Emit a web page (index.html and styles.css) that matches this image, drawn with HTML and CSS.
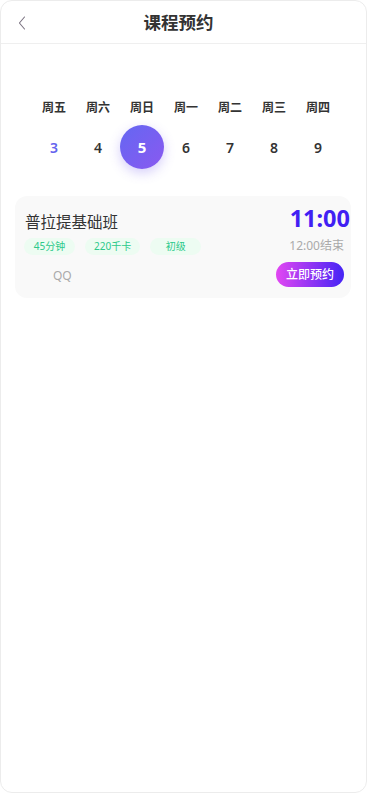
FILE: index.html
```html
<!DOCTYPE html>
<html lang="zh-CN">
<head>
<meta charset="utf-8">
<meta name="viewport" content="width=device-width, initial-scale=1">
<title>课程预约</title>
<link rel="stylesheet" href="styles.css">
</head>
<body>
<div class="frame">
  <header class="header">
    <button class="back" aria-label="返回">
      <svg width="8" height="14" viewBox="0 0 8 14"><path d="M6.5 1 L1.4 7 L6.5 13" fill="none" stroke="#7a7280" stroke-width="1.1" stroke-linecap="round" stroke-linejoin="round"/></svg>
    </button>
    <h1 class="title">课程预约</h1>
  </header>

  <section class="calendar">
    <div class="week-row">
      <span>周五</span><span>周六</span><span>周日</span><span>周一</span><span>周二</span><span>周三</span><span>周四</span>
    </div>
    <div class="date-row">
      <span class="date today">3</span>
      <span class="date">4</span>
      <span class="date active">5</span>
      <span class="date">6</span>
      <span class="date">7</span>
      <span class="date">8</span>
      <span class="date">9</span>
    </div>
  </section>

  <section class="card">
    <div class="card-left">
      <div class="course-name">普拉提基础班</div>
      <div class="tags">
        <span class="tag">45分钟</span>
        <span class="tag">220千卡</span>
        <span class="tag">初级</span>
      </div>
      <div class="coach">QQ</div>
    </div>
    <div class="card-right">
      <div class="start">11:00</div>
      <div class="end">12:00结束</div>
      <button class="book">立即预约</button>
    </div>
  </section>
</div>
</body>
</html>
```
FILE: styles.css
```css
* { box-sizing: border-box; }
html, body { margin: 0; padding: 0; background: #fff; }
body {
  font-family: "Noto Sans", "Noto Sans CJK SC", sans-serif;
  color: #333;
}
.frame {
  width: 367px;
  height: 793px;
  border: 1px solid #ececec;
  border-radius: 12px;
  overflow: hidden;
  background: #fff;
}
.header {
  height: 43px;
  border-bottom: 1px solid #efefef;
  display: flex;
  align-items: center;
  position: relative;
}
.back {
  position: absolute;
  left: 16px;
  top: 14px;
  padding: 0;
  border: 0;
  background: none;
  width: 10px;
  height: 16px;
  display: flex;
  align-items: center;
  justify-content: center;
}
.title {
  margin: 0 auto;
  padding-right: 10px;
  font-size: 17.5px;
  font-weight: 700;
  color: #333;
  line-height: 24px;
}
.calendar {
  padding: 56px 0 0 31px;
}
.week-row, .date-row {
  display: grid;
  grid-template-columns: repeat(7, 44px);
}
.week-row span {
  text-align: center;
  font-size: 12px;
  font-weight: 700;
  line-height: 16px;
  color: #333;
}
.date-row { margin-top: 9px; }
.date {
  height: 44px;
  display: flex;
  align-items: center;
  justify-content: center;
  font-size: 14px;
  font-weight: 600;
  color: #333;
}
.date.today { color: #6563ee; }
.date.active {
  border-radius: 50%;
  color: #fff;
  font-weight: 700;
  font-size: 15px;
  background: linear-gradient(135deg, #6467f2 0%, #8a59f0 100%);
  box-shadow: 0 4px 12px rgba(116, 92, 240, 0.3);
}
.card {
  margin: 27px 15px 0 14px;
  height: 102px;
  background: #f9f9f9;
  border-radius: 12px;
  display: flex;
  justify-content: space-between;
  padding: 8px 7px 0 9px;
}
.card-left { padding-top: 7px; }
.course-name {
  font-size: 15.5px;
  line-height: 22px;
  color: #333;
  padding-left: 1px;
}
.tags {
  display: flex;
  gap: 10px;
  margin-top: 5px;
}
.tag {
  height: 17px;
  min-width: 51px;
  padding: 0 9px;
  border-radius: 9px;
  background: #edfcf2;
  color: #2cc98a;
  font-size: 10px;
  line-height: 17px;
  text-align: center;
}
.coach {
  margin: 13px 0 0 29px;
  font-size: 12px;
  line-height: 16px;
  color: #aaa;
}
.card-right {
  display: flex;
  flex-direction: column;
  align-items: flex-end;
}
.start {
  font-size: 23.5px;
  font-weight: 700;
  line-height: 29px;
  color: #4120f3;
  margin-right: -6px;
}
.end {
  margin-top: 5px;
  font-size: 12px;
  line-height: 16px;
  color: #aaa;
}
.book {
  margin-top: 8px;
  height: 25px;
  padding: 0 10px;
  border: 0;
  border-radius: 13px;
  background: linear-gradient(90deg, #e247f2 0%, #4524f5 100%);
  color: #fff;
  font-family: "Noto Sans", "Noto Sans CJK SC", sans-serif;
  font-size: 12px;
  font-weight: 500;
  line-height: 25px;
}
```
